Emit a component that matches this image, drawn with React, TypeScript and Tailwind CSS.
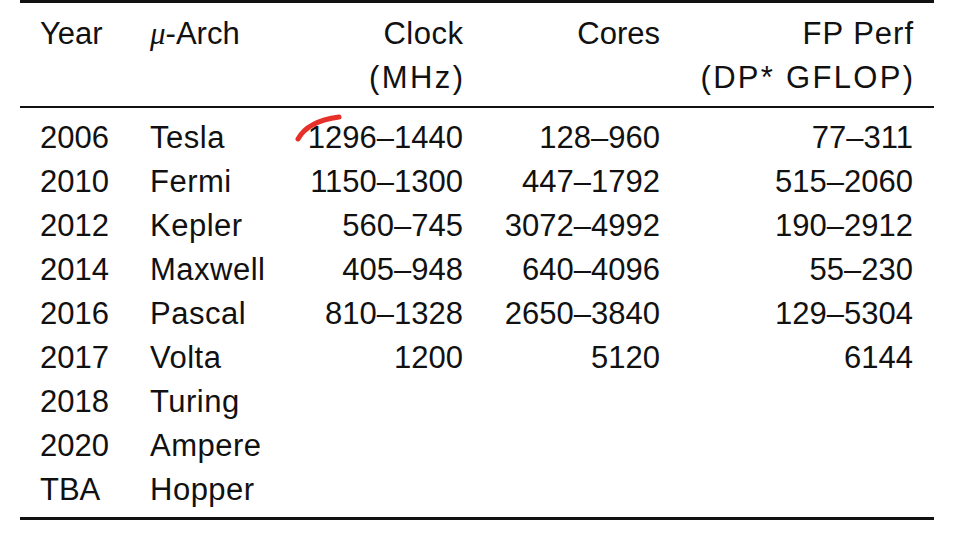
const rows = [
  { year: '2006', arch: 'Tesla', clock: '1296–1440', cores: '128–960', fp: '77–311' },
  { year: '2010', arch: 'Fermi', clock: '1150–1300', cores: '447–1792', fp: '515–2060' },
  { year: '2012', arch: 'Kepler', clock: '560–745', cores: '3072–4992', fp: '190–2912' },
  { year: '2014', arch: 'Maxwell', clock: '405–948', cores: '640–4096', fp: '55–230' },
  { year: '2016', arch: 'Pascal', clock: '810–1328', cores: '2650–3840', fp: '129–5304' },
  { year: '2017', arch: 'Volta', clock: '1200', cores: '5120', fp: '6144' },
  { year: '2018', arch: 'Turing', clock: '', cores: '', fp: '' },
  { year: '2020', arch: 'Ampere', clock: '', cores: '', fp: '' },
  { year: 'TBA', arch: 'Hopper', clock: '', cores: '', fp: '' },
]

const cols = 'grid grid-cols-[110px_140px_173px_197px_253px]'

export default function App() {
  return (
    <div className="relative w-[967px] h-[540px] bg-white overflow-hidden">
      <div
        className="ml-[20px] w-[914px] border-t-[3px] border-b-[3px] border-[#111] text-[31px] leading-[44px] text-[#111]"
        style={{ fontFamily: '"Liberation Sans", Arial, sans-serif' }}
      >
        {/* Kopfzeile */}
        <div className={`${cols} pl-[20px] pt-[9px] pb-[6px] border-b-2 border-[#111]`}>
          <div>Year</div>
          <div>
            <span className="italic" style={{ fontFamily: '"Liberation Serif", serif' }}>μ</span>-Arch
          </div>
          <div className="text-right">
            <div className="tracking-[0.5px] -mr-[0.5px]">Clock</div>
            <div className="tracking-[2.4px] -mr-[2.4px]">(MHz)</div>
          </div>
          <div className="text-right">Cores</div>
          <div className="text-right">
            <div className="tracking-[1px] -mr-[1px]">FP Perf</div>
            <div className="tracking-[2.3px] -mr-[2.3px]">(DP* GFLOP)</div>
          </div>
        </div>

        {/* Daten */}
        <div className="pl-[20px] pt-[8px] pb-[5px]">
          {rows.map(r => (
            <div key={r.year + r.arch} className={cols}>
              <div>{r.year}</div>
              <div className="tracking-[0.5px]">{r.arch}</div>
              <div className="text-right">{r.clock}</div>
              <div className="text-right">{r.cores}</div>
              <div className="text-right">{r.fp}</div>
            </div>
          ))}
        </div>
      </div>

      {/* roter Stiftstrich */}
      <svg className="absolute left-[294px] top-[112px]" width="52" height="32" viewBox="0 0 52 32">
        <path
          d="M4 27 C 10 16, 22 8, 45 5"
          fill="none"
          stroke="#e8302a"
          strokeWidth="5"
          strokeLinecap="round"
        />
      </svg>
    </div>
  )
}
